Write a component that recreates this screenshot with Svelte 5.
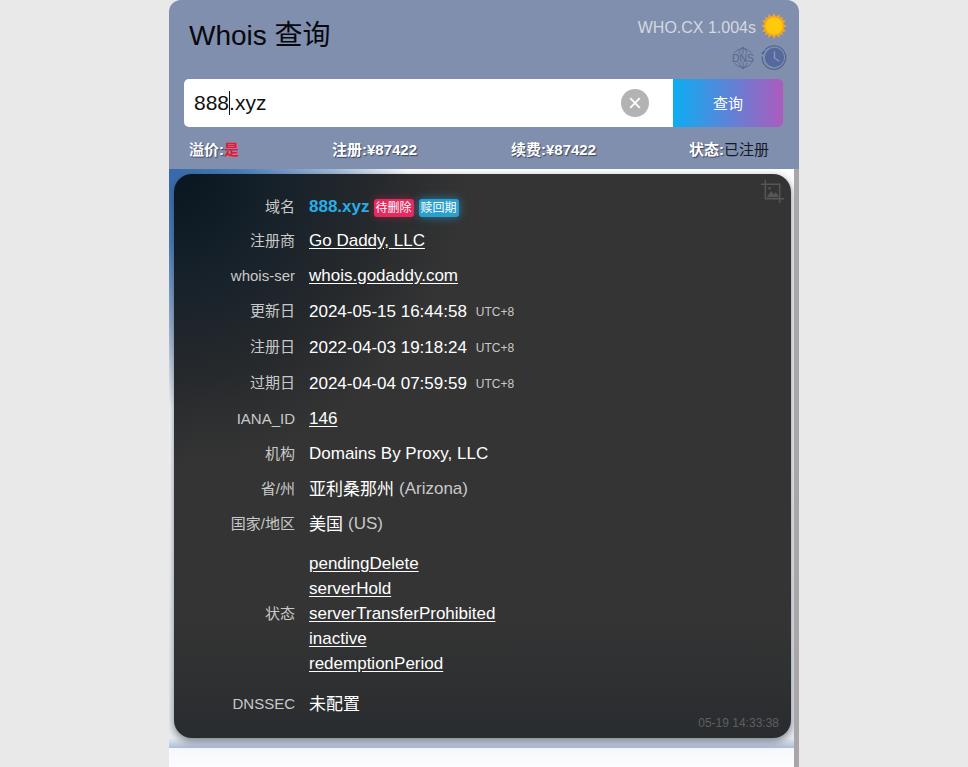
<script>
  const rows = [
    { k: '注册商', v: 'Go Daddy, LLC', link: true, cjk: true },
    { k: 'whois-ser', v: 'whois.godaddy.com', link: true },
    { k: '更新日', v: '2024-05-15 16:44:58', tz: true },
    { k: '注册日', v: '2022-04-03 19:18:24', tz: true },
    { k: '过期日', v: '2024-04-04 07:59:59', tz: true },
    { k: 'IANA_ID', v: '146', link: true },
    { k: '机构', v: 'Domains By Proxy, LLC', cjk: true },
    { k: '省/州', v: '亚利桑那州', sub: '(Arizona)', cjk: true, cjkVal: true },
    { k: '国家/地区', v: '美国', sub: '(US)', cjk: true, cjkVal: true }
  ];
  const statuses = ['pendingDelete', 'serverHold', 'serverTransferProhibited', 'inactive', 'redemptionPeriod'];
</script>

<div class="page">
  <main class="wrap">
    <header class="head">
      <div class="top">
        <h1>Whois 查询</h1>
        <div class="side">
          <div class="speed">
            <span>WHO.CX 1.004s</span>
            <svg class="sun" viewBox="0 0 26 26" width="26" height="26" aria-hidden="true">
              <g fill="#f5a623">
                <polygon points="13,0 15,4 11,4" />
                <polygon points="13,26 15,22 11,22" />
                <polygon points="0,13 4,11 4,15" />
                <polygon points="26,13 22,11 22,15" />
                <polygon points="3.8,3.8 8,5.2 5.2,8" />
                <polygon points="22.2,3.8 18,5.2 20.8,8" />
                <polygon points="3.8,22.2 8,20.8 5.2,18" />
                <polygon points="22.2,22.2 18,20.8 20.8,18" />
                <polygon points="7.6,1.2 10.6,3.6 7,5" />
                <polygon points="18.4,1.2 15.4,3.6 19,5" />
                <polygon points="7.6,24.8 10.6,22.4 7,21" />
                <polygon points="18.4,24.8 15.4,22.4 19,21" />
                <polygon points="1.2,7.6 3.6,10.6 5,7" />
                <polygon points="24.8,7.6 22.4,10.6 21,7" />
                <polygon points="1.2,18.4 3.6,15.4 5,19" />
                <polygon points="24.8,18.4 22.4,15.4 21,19" />
              </g>
              <circle cx="13" cy="13" r="10" fill="#f7a81b" />
              <circle cx="13" cy="13" r="8.500" fill="#ffc90e" />
            </svg>
          </div>
          <div class="tools">
            <svg viewBox="0 0 24 24" width="24" height="24" fill="none" stroke="#55658f" stroke-width=".8" aria-hidden="true">
              <path d="M3 7.500a10.800 10.800 0 0 1 18 0M3 16.500a10.800 10.800 0 0 0 18 0M12 1v7M12 16v7M8 8c.4-3 1.800-5.600 4-7 2.200 1.400 3.600 4 4 7M8 16c.4 3 1.800 5.600 4 7 2.200-1.400 3.600-4 4-7" />
              <text x="12" y="15.800" text-anchor="middle" class="dns">DNS</text>
            </svg>
            <svg viewBox="0 0 28 28" width="27" height="27" aria-hidden="true">
              <path d="M5.500 5.800A12.200 12.200 0 1 1 2.300 13" fill="none" stroke="#55658f" stroke-width="1.300" />
              <path d="M1 9.500l2.500 1.500 2.800-5.500z" fill="#55658f" />
              <circle cx="15" cy="14" r="10" fill="#56699e" />
              <path d="M15 7.500V14.500L20 18" fill="none" stroke="#8796b5" stroke-width="1.500" />
            </svg>
          </div>
        </div>
      </div>

      <div class="search">
        <div class="field">
          <span class="typed">888<i class="caret"></i>.xyz</span>
          <span class="clear">
            <svg viewBox="0 0 12 12" width="12" height="12" aria-hidden="true"><path d="M1.200 1.200l9.600 9.600M10.800 1.200l-9.600 9.600" stroke="#fff" stroke-width="1.800" /></svg>
          </span>
        </div>
        <button type="button">查询</button>
      </div>

      <div class="prices">
        <span><b>溢价:</b><b class="red">是</b></span>
        <span><b>注册:¥87422</b></span>
        <span><b>续费:¥87422</b></span>
        <span><b>状态:</b><em>已注册</em></span>
      </div>
    </header>

    <section class="body">
      <article class="card">
        <svg class="crop" viewBox="0 0 24 24" width="23" height="23" fill="none" stroke="#565656" stroke-width="1.500" aria-hidden="true">
          <path d="M4.500 0v19.500h19.500M0 4.500h19.500v19.500" />
          <path d="M6 18l4.500-6.500 3 3.500 2-2.500 3.500 5.500z" fill="#565656" stroke="none" />
          <circle cx="9" cy="8.500" r="1.300" fill="#565656" stroke="none" />
        </svg>

        <div class="row first">
          <div class="key cjk">域名</div>
          <div class="val down">
            <strong>888.xyz</strong>
            <span class="tag pink">待删除</span>
            <span class="tag blue">赎回期</span>
          </div>
        </div>

        {#each rows as r}
          <div class="row" class:tall={r.tz}>
            <div class="key" class:cjk={r.cjk} class:cjk2={r.tz}>{r.k}</div>
            <div class="val" class:down={r.tz} class:up={r.cjkVal}>
              {#if r.link}<a href="#top">{r.v}</a>{:else}{r.v}{/if}
              {#if r.tz}<small>UTC+8</small>{/if}
              {#if r.sub}<span class="sub">{r.sub}</span>{/if}
            </div>
          </div>
        {/each}

        <div class="row status">
          <div class="key cjk">状态</div>
          <div class="val list">
            {#each statuses as s}<a href="#top">{s}</a>{/each}
          </div>
        </div>

        <div class="row">
          <div class="key">DNSSEC</div>
          <div class="val up">未配置</div>
        </div>

        <time>05-19 14:33:38</time>
      </article>
      <div class="bar"></div>
    </section>
  </main>
</div>

<style>
  :global(body) {
    margin: 0;
    background: #e9e9e9;
    font-family: "Liberation Sans", "Noto Sans CJK SC", Arial, sans-serif;
  }
  .page {
    height: 767px;
    overflow: hidden;
  }
  .wrap {
    width: 630px;
    margin: 0 auto;
  }
  .head {
    height: 169px;
    box-sizing: border-box;
    background: #7f8fad;
    border-radius: 12px 12px 0 0;
    padding: 0 16px 0 15px;
  }
  .top {
    height: 79px;
    display: flex;
    justify-content: space-between;
  }
  h1 {
    margin: 19px 0 0 5px;
    font-size: 28px;
    font-weight: 400;
    line-height: 34px;
    color: #08080e;
  }
  .side {
    display: flex;
    flex-direction: column;
    align-items: flex-end;
    margin-right: -4px;
  }
  .speed {
    margin-top: 13px;
    display: flex;
    align-items: center;
    gap: 5px;
    font-size: 16px;
    color: #d5d8e0;
    height: 26px;
  }
  .speed span {
    margin-top: 3px;
  }
  .tools {
    margin-top: 5px;
    display: flex;
    align-items: center;
    gap: 5px;
  }
  .dns {
    font: 10.500px "Liberation Sans", sans-serif;
    fill: #55658f;
    stroke: #7f8fad;
    stroke-width: 1.500;
    paint-order: stroke;
  }
  .search {
    display: flex;
    height: 48px;
  }
  .field {
    flex: 1;
    background: #fff;
    border-radius: 5px 0 0 5px;
    display: flex;
    align-items: center;
    justify-content: space-between;
    padding: 0 24px 0 10px;
  }
  .typed {
    font-size: 21px;
    color: #111;
    display: inline-flex;
    align-items: center;
  }
  .caret {
    width: 1px;
    height: 24px;
    background: #111;
    margin-right: -1px;
  }
  .clear {
    width: 28px;
    height: 28px;
    border-radius: 50%;
    background: #b3b3b3;
    display: flex;
    align-items: center;
    justify-content: center;
  }
  button {
    width: 110px;
    border: 0;
    padding: 0 0 2px;
    border-radius: 0 5px 5px 0;
    background: linear-gradient(90deg, #0badf3, #ad5bbd);
    color: #fff;
    font: 15px "Liberation Sans", "Noto Sans CJK SC", sans-serif;
  }
  .prices {
    height: 42px;
    font-size: 15px;
    line-height: 45px;
    color: #fff;
    display: grid;
    grid-template-columns: 143px 179px 178px 1fr;
    padding-left: 5px;
    text-shadow: 1px 1px 1px #3a4660;
  }
  .prices .red {
    color: #f0142f;
    text-shadow: none;
  }
  .prices em {
    font-style: normal;
    color: #141a28;
    text-shadow: none;
  }
  .body {
    position: relative;
    height: 598px;
    box-sizing: border-box;
    background: linear-gradient(#f6f8fc, #fff 30px) 0 579px no-repeat #fff;
    padding: 5px 8px 0 5px;
    overflow: hidden;
  }
  .body::before {
    content: "";
    position: absolute;
    inset: 0 0 19px 0;
    background:
      linear-gradient(to top, #aebcd6, rgba(174, 188, 214, 0) 10px),
      radial-gradient(circle 240px at 0 0, #3669ab 0%, #4c80bb 30%, #a3bbd8 68%, rgba(255, 255, 255, 0) 100%),
      linear-gradient(#fff 0%, #fff 50%, #e9ecf0 100%);
  }
  .bar {
    position: absolute;
    right: 0;
    top: 0;
    bottom: 0;
    width: 5px;
    background: #a8a6a8;
  }
  .card {
    position: relative;
    height: 564px;
    box-sizing: border-box;
    padding-top: 15px;
    border-radius: 18px;
    background:
      radial-gradient(circle 290px at 0 0, #08161f 0%, #16212a 35%, #26292c 70%, rgba(52, 52, 52, 0) 100%),
      linear-gradient(to top, #292c2f 0%, rgba(41, 44, 47, 0) 120px),
      #343434;
    box-shadow: 0 3px 8px rgba(40, 48, 70, .6);
    color: #fff;
    font-size: 17px;
  }
  .crop {
    position: absolute;
    top: 6px;
    right: 7px;
  }
  .row {
    display: flex;
    align-items: center;
    min-height: 35px;
  }
  .row.first {
    min-height: 34px;
  }
  .row.tall {
    min-height: 36px;
  }
  .key {
    width: 121px;
    flex: none;
    text-align: right;
    color: #c9c9c9;
    font-size: 15px;
  }
  .key.cjk {
    padding-bottom: 2px;
  }
  .key.cjk2 {
    padding-bottom: 4px;
  }
  .val {
    margin-left: 14px;
    display: flex;
    align-items: center;
    white-space: nowrap;
  }
  .val.down {
    padding-top: 2px;
  }
  .val.up {
    padding-bottom: 2px;
  }
  a {
    color: #fff;
    text-decoration: underline;
    text-underline-offset: 2px;
  }
  strong {
    color: #27aee8;
    font-weight: 700;
    font-size: 17px;
  }
  .tag {
    margin-left: 5px;
    margin-top: 2px;
    padding: 0 2px;
    height: 18px;
    line-height: 18px;
    border-radius: 3px;
    font-size: 12px;
    color: #fff;
  }
  .pink {
    margin-left: 4px;
    background: #e8285f;
    box-shadow: 0 0 8px rgba(232, 40, 95, .4);
  }
  .blue {
    background: #2a9fd0;
    box-shadow: 0 0 10px rgba(42, 170, 225, .6);
  }
  small {
    margin-left: 9px;
    font-size: 12px;
    color: #c9c9c9;
  }
  .sub {
    margin-left: 5px;
    margin-top: 2px;
    color: #c9c9c9;
  }
  .status {
    min-height: 145px;
  }
  .list {
    flex-direction: column;
    align-items: flex-start;
    line-height: 25px;
  }
  time {
    position: absolute;
    right: 12px;
    bottom: 8px;
    font-size: 12px;
    color: #5f5f5f;
  }
</style>
